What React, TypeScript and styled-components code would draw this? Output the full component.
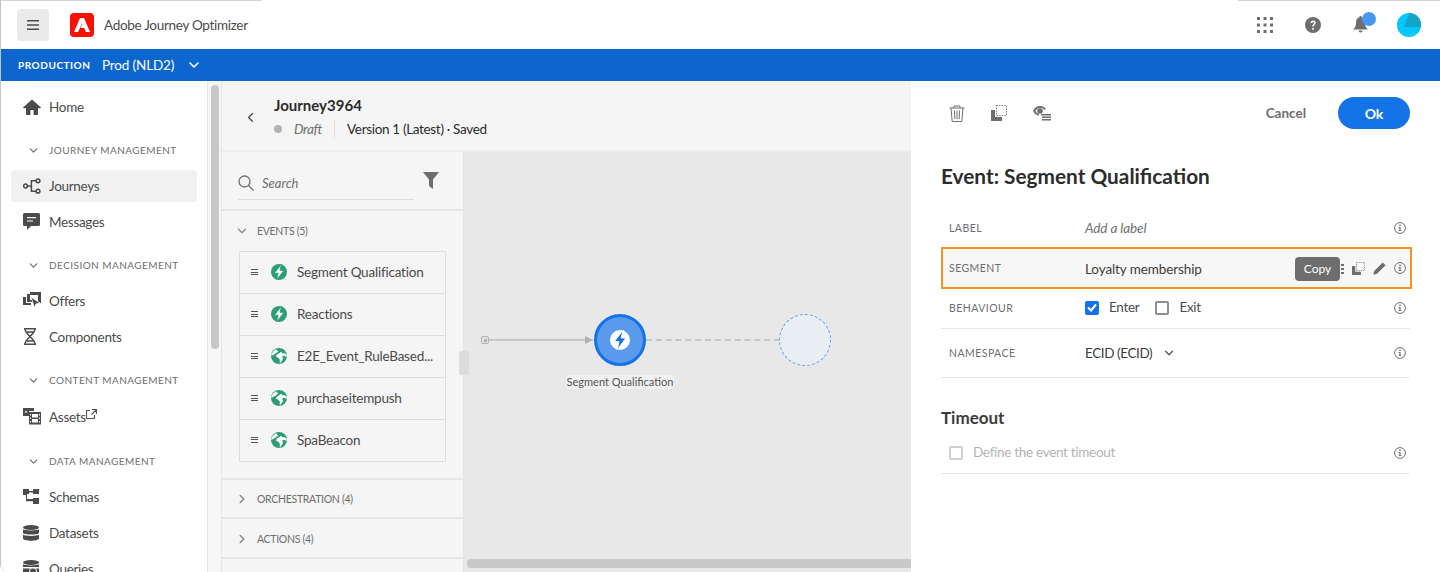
import React from "react";
import styled, { createGlobalStyle } from "styled-components";
import { ChevronDown, ChevronRight, ChevronLeft } from "lucide-react";

const Global = createGlobalStyle`
  html, body { margin: 0; padding: 0; background: #fff; }
  body { font-family: "Lato", "Noto Sans", sans-serif; color: #4b4b4b; }
  * { box-sizing: border-box; }
`;

const Frame = styled.div`
  width: 1440px; height: 572px; overflow: hidden; display: flex; flex-direction: column;
  border-left: 1px solid #c4c4c4; border-bottom-left-radius: 8px; background: #fff;
`;
const Header = styled.header`
  height: 49px; flex: none; display: flex; align-items: center; padding: 0 19px 0 16px;
  background: linear-gradient(90deg, #d4d4d4 261px, #fff 261px, #fff 1237px, #d4d4d4 1237px) top / 100% 1px no-repeat, #fff;
`;
const MenuButton = styled.div`
  width: 32px; height: 32px; background: #eaeaea; border-radius: 4px; display: flex; align-items: center; justify-content: center;
`;
const LogoBox = styled.div`
  width: 24px; height: 24px; background: #fa0f00; border-radius: 4px; margin-left: 21px; display: flex; align-items: center; justify-content: center;
`;
const AppName = styled.div`
  margin-left: 10px; font-size: 13.5px; color: #4b4b4b; letter-spacing: -0.3px;
`;
const HeaderIcons = styled.div`
  margin-left: auto; display: flex; align-items: center;
`;
const HeaderSlot = styled.div<{ $w: number; $gap?: number }>`
  width: ${(p) => p.$w}px; margin-right: ${(p) => p.$gap ?? 0}px; height: 32px; display: flex; align-items: center; justify-content: center; position: relative;
`;
const Dot = styled.span`
  position: absolute; width: 14px; height: 14px; border-radius: 50%; background: #4b96f3; top: 3px; left: 25px;
`;
const OrgBar = styled.div`
  height: 32px; flex: none; background: #0d66d0; color: #fff; display: flex; align-items: center; padding-left: 17px;
`;
const OrgLabel = styled.span`
  font-size: 10px; font-weight: 700; letter-spacing: 0.55px; width: 84px;
`;
const OrgName = styled.span`
  font-size: 13.5px; letter-spacing: -0.15px; width: 85px;
`;
const Body = styled.div`
  flex: 1; min-height: 0; display: flex;
`;
const Sidebar = styled.nav`
  width: 207px; flex: none; background: #fff; border-right: 1px solid #e6e6e6; padding: 8px 10px 0; overflow: hidden;
`;
const NavRow = styled.div<{ $active?: boolean; $tall?: boolean }>`
  height: ${(p) => (p.$tall ? 38 : 36)}px; display: flex; align-items: center; position: relative; padding-top: 1px;
  font-size: 13.5px; letter-spacing: -0.3px; color: #4b4b4b; margin-bottom: 0;
  &::before {
    content: ""; display: ${(p) => (p.$active ? "block" : "none")}; position: absolute; left: 0; right: 0; top: 2px; bottom: 2px;
    background: #f1f1f1; border-radius: 4px; z-index: 0;
  }
`;
const NavIcon = styled.span`
  width: 38px; padding-left: 12px; display: flex; position: relative; top: -1px; z-index: 1; flex: none;
`;
const NavText = styled.span`
  position: relative; top: -1px; z-index: 1;
`;
const SectionRow = styled.div`
  height: 43px; padding: 14px 0 0 16px; display: flex; align-items: flex-start; gap: 9px;
  font-size: 10px; letter-spacing: 0.45px; color: #6e6e6e; line-height: 22px; text-transform: uppercase;
  svg { margin-top: 5px; flex: none; }
`;
const Scroller = styled.div`
  width: 14px; flex: none; background: #f6f6f6; border-right: 1px solid #e6e6e6; padding: 4px 2px 0 3px;
`;
const ScrollThumb = styled.div`
  width: 8px; height: 264px; border-radius: 4px; background: #c8c8c8;
`;
const Main = styled.main`
  width: 689px; flex: none; display: flex; flex-direction: column; background: #f5f5f5;
`;
const JourneyHead = styled.div`
  height: 71px; flex: none; display: flex; border-bottom: 2px solid #ececec; padding-left: 21px; align-items: flex-start;
`;
const BackSlot = styled.div`
  width: 31px; padding-top: 28px; color: #555;
`;
const JourneyTitle = styled.div`
  margin-top: 14px; font-size: 15px; font-weight: 700; color: #2c2c2c; line-height: 20px;
`;
const JourneyMeta = styled.div`
  margin-top: 5px; display: flex; align-items: center; font-size: 13.5px; letter-spacing: -0.33px; line-height: 18px; color: #2c2c2c;
`;
const StatusDot = styled.span`
  width: 8px; height: 8px; background: #b3b3b3; border-radius: 50%; margin-right: 12px;
`;
const Draft = styled.span`
  font-style: italic; color: #6e6e6e; padding-right: 12px; border-right: 1px solid #e1e1e1; margin-right: 12px;
`;
const Workspace = styled.div`
  flex: 1; min-height: 0; display: flex; position: relative;
`;
const Palette = styled.aside`
  width: 242px; flex: none; border-right: 1px solid #e4e4e4; display: flex; flex-direction: column;
`;
const SearchRow = styled.div`
  height: 59px; flex: none; border-bottom: 2px solid #e6e6e6; padding: 0 24px 0 16px; display: flex; position: relative;
`;
const SearchField = styled.div`
  width: 176px; height: 48px; border-bottom: 1px solid #dcdcdc; display: flex; align-items: center; gap: 8px; padding-top: 15px;
  font-size: 13px; font-style: italic; color: #6e6e6e;
`;
const FilterSlot = styled.div`
  margin: 20px 0 0 9px;
`;
const GroupHead = styled.div<{ $h: number; $border?: boolean; $top?: boolean; $drop?: boolean }>`
  height: ${(p) => p.$h}px; flex: none; display: flex; align-items: center; gap: 8px; padding-left: 13px;
  padding-top: ${(p) => (p.$drop ? 2 : 0)}px;
  font-size: 10.5px; letter-spacing: -0.3px; color: #6e6e6e;
  border-bottom: ${(p) => (p.$border ? "2px solid #e6e6e6" : "none")};
  border-top: ${(p) => (p.$top ? "2px solid #e6e6e6" : "none")};
  svg { color: #8a8a8a; }
`;
const EventList = styled.div`
  margin: 0 17px 16px 17px; border: 1px solid #dedede; flex: none;
`;
const EventRow = styled.div`
  height: 42px; display: flex; align-items: center; font-size: 13.5px; color: #4b4b4b; border-bottom: 1px solid #dedede;
  padding: 0 0 1px 11px;
  &:last-child { height: 41px; border-bottom: 0; padding-bottom: 2px; }
`;
const Grip = styled.span`
  width: 7px; height: 6px; border-top: 1px solid #555; border-bottom: 1px solid #555; position: relative; margin-right: 13px;
  &::after { content: ""; position: absolute; left: 0; right: 0; top: 1.5px; height: 1px; background: #555; }
`;
const EventName = styled.span`
  margin-left: 10px; white-space: nowrap; letter-spacing: -0.22px;
`;
const Canvas = styled.section`
  flex: 1; background: #e8e8e8; position: relative; overflow: hidden;
`;
const Handle = styled.div`
  position: absolute; left: 237px; top: 199px; width: 10px; height: 24px; background: #dcdcdc; border-radius: 2px;
`;
const StartPort = styled.div`
  position: absolute; left: 17px; top: 184px; width: 8px; height: 8px; border: 1px solid #b5b5b5; border-radius: 2px; background: #e0e0e0;
  &::after { content: ""; position: absolute; left: 1.5px; top: 1.5px; width: 3px; height: 3px; border-radius: 50%; background: #a8a8a8; }
`;
const SolidLine = styled.div`
  position: absolute; left: 25px; top: 187px; width: 104px; height: 1px; background: #c4c4c4; box-shadow: 0 1px 0 #ccc;
`;
const Arrow = styled.div`
  position: absolute; left: 121px; top: 184px; width: 0; height: 0;
  border-left: 8px solid #b3b3b3; border-top: 4px solid transparent; border-bottom: 4px solid transparent;
`;
const EventNode = styled.div`
  position: absolute; left: 130px; top: 162px; width: 52px; height: 52px; border-radius: 50%; background: #5a9bee; border: 3px solid #1473e6;
  display: flex; align-items: center; justify-content: center;
`;
const NodeLabel = styled.div`
  position: absolute; left: 102px; top: 223px; width: 108px; height: 14px; border-radius: 3px; background: #f0f0f0;
  font-size: 11px; line-height: 14px; text-align: center; color: #555; white-space: nowrap;
`;
const DashLine = styled.div`
  position: absolute; left: 182px; top: 187px; width: 134px; height: 0; border-top: 2px dashed #c6c6c6;
`;
const GhostNode = styled.div`
  position: absolute; left: 315px; top: 162px; width: 52px; height: 52px; border-radius: 50%; background: #e9eef3; border: 1px dashed #5a9bee;
`;
const HScroll = styled.div`
  position: absolute; left: 3px; right: 0; top: 407px; height: 9px; border-radius: 4px 0 0 4px; background: #c8c8c8;
`;
const Panel = styled.aside`
  flex: 1; min-width: 0; background: #fff; padding: 0 30px; position: relative;
`;
const PanelBar = styled.div`
  height: 48px; margin-top: 8px; display: flex; align-items: center; padding-left: 8px;
`;
const ToolIcon = styled.span`
  width: 42px; display: flex; color: #6e6e6e;
`;
const Cancel = styled.span`
  margin-left: auto; font-size: 13.5px; font-weight: 700; color: #6e6e6e; margin-right: 32px;
`;
const Ok = styled.button`
  width: 72px; height: 32px; border: 0; border-radius: 16px; background: #1473e6; color: #fff; font: 700 14px "Lato", sans-serif;
`;
const PanelTitle = styled.h2`
  margin: 0; padding-top: 25px; height: 71px; font-size: 20.8px; font-weight: 700; color: #2c2c2c; line-height: 28px;
`;
const FormRow = styled.div<{ $h: number; $line?: boolean; $hot?: boolean; $lift?: number }>`
  height: ${(p) => p.$h}px; display: flex; align-items: center; padding-left: 8px; padding-bottom: ${(p) => p.$lift ?? 0}px;
  position: relative; margin-right: ${(p) => (p.$hot ? "-2px" : "0")};
  border-bottom: ${(p) => (p.$line ? "1px solid #e6e6e6" : "none")};
  ${(p) => (p.$hot ? "outline: 2px solid #f29423; outline-offset: -2px; background: #f7f7f7;" : "")}
`;
const FieldLabel = styled.span`
  width: 136px; font-size: 10.5px; letter-spacing: 0.45px; color: #6e6e6e; flex: none;
`;
const FieldValue = styled.span<{ $ghost?: boolean; $tight?: boolean; $drop?: boolean }>`
  font-size: 13.5px; letter-spacing: ${(p) => (p.$tight ? "-0.4px" : "-0.1px")}; position: relative; top: ${(p) => (p.$drop ? 1 : 0)}px;
  color: ${(p) => (p.$ghost ? "#6e6e6e" : "#3c3c3c")}; font-style: ${(p) => (p.$ghost ? "italic" : "normal")};
`;
const Info = styled.span<{ $nudge?: number }>`
  margin-left: auto; margin-right: ${(p) => p.$nudge ?? 4}px; display: flex; flex: none;
`;
const Check = styled.span<{ $on?: boolean; $off?: boolean }>`
  width: 14px; height: 14px; flex: none; border-radius: 2px; display: flex; align-items: center; justify-content: center;
  background: ${(p) => (p.$on ? "#1473e6" : "#fff")};
  border: ${(p) => (p.$on ? "none" : `2px solid ${p.$off ? "#d0d0d0" : "#8e8e8e"}`)};
`;
const CheckText = styled.span<{ $muted?: boolean }>`
  font-size: 13.5px; letter-spacing: -0.3px; margin: 0 16px 0 10px; position: relative; top: -1px; color: ${(p) => (p.$muted ? "#b3b3b3" : "#4b4b4b")};
`;
const SubTitle = styled.h3`
  margin: 0; height: 58px; padding-top: 28px; font-size: 17px; font-weight: 700; color: #3c3c3c; line-height: 24px;
`;
const Tip = styled.div`
  position: absolute; left: 354px; top: 10px; width: 45px; height: 24px; border-radius: 4px; background: #6e6e6e; color: #fff;
  font-size: 12px; line-height: 24px; text-align: center; z-index: 1;
`;
const RowTools = styled.div`
  position: absolute; left: 400px; top: 15px; display: flex; align-items: center; gap: 8px;
`;
const EdgeDots = styled.span`
  width: 3px; height: 10px; background: repeating-linear-gradient(#6e6e6e 0 2px, transparent 2px 4px);
`;

const Bolt = ({ size, bg, fg }: { size: number; bg: string; fg: string }) => (
  <svg width={size} height={size} viewBox="0 0 16 16">
    <circle cx="8" cy="8" r="8" fill={bg} />
    <path d="M10.600 0 3.400 9.200h3.800L5.600 16l7.200-9.600H8.900z" fill={fg} stroke={bg} strokeWidth="0.8" />
  </svg>
);
const Globe = () => (
  <svg width="16" height="16" viewBox="0 0 16 16">
    <circle cx="8" cy="8" r="8" fill="#2d9d78" />
    <path d="M2.600 3 5 1.200 7.200 3.400 4.600 5.400 2.800 6.400.4 8 .5 6Z" fill="#fff" />
    <path d="M8.500 5 10 3.800 11.600 5.600 13 5 15.600 6.500 15.800 9 13 7.800 11.200 8.400 12 11 10.400 13.400 8.800 15.700 8.800 11.500 7 9.400 4.800 8.600 6 6.400Z" fill="#fff" />
  </svg>
);
const InfoIcon = () => (
  <svg width="12" height="12" viewBox="0 0 12 12" fill="none">
    <circle cx="6" cy="6" r="5.400" stroke="#6e6e6e" strokeWidth="1" />
    <rect x="5.200" y="2.400" width="1.600" height="1.600" rx=".5" fill="#6e6e6e" />
    <path d="M4.600 5h2v3.200h.8v.9H4.600v-.9h.8V5.900h-.8z" fill="#6e6e6e" />
  </svg>
);
const CopyIcon = ({ size = 16 }: { size?: number }) => (
  <svg width={size} height={size} viewBox="0 0 16 16">
    <path d="M0 5h4v7h7v4H0z" fill="#6e6e6e" />
    <rect x="5.500" y=".5" width="10" height="10" fill="none" stroke="#777" strokeDasharray="1.400 1.200" />
  </svg>
);

const S = { fill: "#4b4b4b" };
const navIcons: Record<string, React.ReactNode> = {
  home: <svg width="18" height="16" viewBox="0 0 18 16"><path d="M9 .5 0 8.600l.6.6H3V16h4.400v-5h3.200v5H15V9.200h2.400l.6-.6z" {...S} /></svg>,
  journeys: <svg width="18" height="16" viewBox="0 0 18 16" fill="none" stroke="#4b4b4b" strokeWidth="1.500"><circle cx="2.500" cy="8" r="1.900" /><circle cx="15" cy="2.800" r="1.900" /><circle cx="15" cy="13.200" r="1.900" /><path d="M4.400 8h4M13 2.800H8.400v10.400H13" /></svg>,
  messages: <svg width="17" height="17" viewBox="0 0 17 17"><path d="M1.500 0h14A1.500 1.500 0 0 1 17 1.500v10a1.500 1.500 0 0 1-1.500 1.500H8l-4 4v-4H1.500A1.500 1.500 0 0 1 0 11.500v-10A1.500 1.500 0 0 1 1.500 0Z" {...S} /><path d="M4 4h9v1.200H4zM4 7.400h6v1.200H4z" fill="#fff" /></svg>,
  offers: <svg width="18" height="18" viewBox="0 0 18 18"><path d="M0 5h3v6h5v2H0zM4 2h3v6h3v2H4z" {...S} /><path d="M7 0h11v11h-3V3H7z" {...S} /><path d="M8 5l9 6-4 1-1.500 4z" {...S} stroke="#fff" strokeWidth=".8" /></svg>,
  components: <svg width="14" height="17" viewBox="0 0 14 17" fill="none" stroke="#4b4b4b" strokeWidth="1.500"><path d="M1 .8h12M1 16.200h12M2 1c0 5 10 10 10 15M12 1C12 6 2 11 2 16M4 4h6M4 13h6" /></svg>,
  assets: <svg width="18" height="17" viewBox="0 0 18 17"><path d="M0 0h11v3H6v5H0z" {...S} /><path d="M1.500 4.500 3 2.500l1.500 2z" fill="#fff" /><path d="M6 4h12v12.500H6z" {...S} /><path d="M9 6h6v3.500H9zM9 11h6v3.500H9zM7 6h1v1.500H7zM16 6h1v1.500h-1zM7 9.500h1V11H7zM16 9.500h1V11h-1zM7 13h1v1.500H7zM16 13h1v1.500h-1z" fill="#fff" /></svg>,
  schemas: <svg width="16" height="16" viewBox="0 0 16 16"><path d="M0 0h6v2h4V0h6v5h-6V3.500H6V5H4v5h6V9h6v6h-6v-2.800H3V6H0z" {...S} /></svg>,
  datasets: <svg width="16" height="16" viewBox="0 0 16 16"><ellipse cx="8" cy="2.500" rx="8" ry="2.500" {...S} /><path d="M0 4.300c1.500 1.500 14.500 1.500 16 0V8c-1 2-15 2-16 0zM0 9.800c1.500 1.500 14.500 1.500 16 0v3.700c-1 3-15 3-16 0z" {...S} /></svg>,
  queries: <svg width="17" height="17" viewBox="0 0 17 17"><ellipse cx="8" cy="2.500" rx="8" ry="2.500" {...S} /><path d="M0 4.300c1.500 1.500 14.500 1.500 16 0V7H0zM0 8.500h16V14H0z" {...S} /><circle cx="10" cy="11" r="3.500" fill="none" stroke="#fff" /></svg>,
};

const Nav = ({ icon, label, active, tall, ext }: { icon: string; label: string; active?: boolean; tall?: boolean; ext?: boolean }) => (
  <NavRow $active={active} $tall={tall}>
    <NavIcon>{navIcons[icon]}</NavIcon>
    <NavText>{label}</NavText>
    {ext && (
      <svg width="11" height="10" viewBox="0 0 11 10" fill="none" stroke="#555" strokeWidth="1.200" style={{ marginTop: -7 }}>
        <path d="M4 1.500H.5v8h8V6M6 .5h4.500V5M10 1 5.500 5.500" />
      </svg>
    )}
  </NavRow>
);
const Section = ({ children }: { children: string }) => (
  <SectionRow><ChevronDown size={13} color="#6e6e6e" strokeWidth={2.200} />{children}</SectionRow>
);
const events: [string, boolean][] = [
  ["Segment Qualification", true],
  ["Reactions", true],
  ["E2E_Event_RuleBased...", false],
  ["purchaseitempush", false],
  ["SpaBeacon", false],
];

export default function App() {
  return (
    <Frame>
      <Global />
      <Header>
        <MenuButton>
          <svg width="12" height="10" viewBox="0 0 12 10"><path d="M0 0h12v1.600H0zM0 4.200h12v1.600H0zM0 8.400h12V10H0z" fill="#4b4b4b" /></svg>
        </MenuButton>
        <LogoBox>
          <svg width="16" height="14" viewBox="0 0 16 14"><path d="M6 0h4l6 14h-4.100l-1.700-4H6.500l2-4.400L9.600 10 8 5.500 4.100 14H0z" fill="#fff" /></svg>
        </LogoBox>
        <AppName>Adobe Journey Optimizer</AppName>
        <HeaderIcons>
          <HeaderSlot $w={48}>
            <svg width="16" height="16" viewBox="0 0 16 16" fill="#6e6e6e">
              {[0, 6.500, 13].flatMap((y) => [0, 6.500, 13].map((x) => <rect key={`${x}-${y}`} x={x} y={y} width="3" height="3" />))}
            </svg>
          </HeaderSlot>
          <HeaderSlot $w={48}>
            <svg width="16" height="16" viewBox="0 0 16 16"><circle cx="8" cy="8" r="8" fill="#6e6e6e" /><path d="M5.500 6c0-3.300 5.200-3.300 5.200-.2 0 2-2 2-2 3.700H7.200c0-2.400 2-2.500 2-3.700 0-1-1.800-1-2 .2z" fill="#fff" /><circle cx="8" cy="11.800" r="1" fill="#fff" /></svg>
          </HeaderSlot>
          <HeaderSlot $w={46} $gap={14}>
            <svg width="15" height="17" viewBox="0 0 15 17"><path d="M7.500 0c.8 0 1.200.6 1.200 1.300C11 2 12 4 12 6.500c0 3 .6 5 3 7H0c2.400-2 3-4 3-7C3 4 4 2 6.300 1.300 6.300.6 6.700 0 7.500 0ZM5.500 14.500h4a2 2 0 0 1-4 0Z" fill="#6e6e6e" /></svg>
            <Dot />
          </HeaderSlot>
          <HeaderSlot $w={24}>
            <svg width="24" height="24" viewBox="0 0 24 24"><circle cx="12" cy="12" r="12" fill="#00c8ff" /><path d="M12 0a12 12 0 0 1 12 14H7z" fill="#12a5c5" /></svg>
          </HeaderSlot>
        </HeaderIcons>
      </Header>
      <OrgBar>
        <OrgLabel>PRODUCTION</OrgLabel>
        <OrgName>Prod (NLD2)</OrgName>
        <ChevronDown size={16} color="#fff" strokeWidth={2.400} style={{ marginLeft: -1 }} />
      </OrgBar>
      <Body>
        <Sidebar>
          <Nav icon="home" label="Home" />
          <Section>Journey Management</Section>
          <Nav icon="journeys" label="Journeys" active />
          <Nav icon="messages" label="Messages" />
          <Section>Decision Management</Section>
          <Nav icon="offers" label="Offers" />
          <Nav icon="components" label="Components" />
          <Section>Content Management</Section>
          <Nav icon="assets" label="Assets" tall ext />
          <Section>Data Management</Section>
          <Nav icon="schemas" label="Schemas" />
          <Nav icon="datasets" label="Datasets" />
          <Nav icon="queries" label="Queries" />
        </Sidebar>
        <Scroller><ScrollThumb /></Scroller>
        <Main>
          <JourneyHead>
            <BackSlot><ChevronLeft size={15} strokeWidth={2.400} /></BackSlot>
            <div>
              <JourneyTitle>Journey3964</JourneyTitle>
              <JourneyMeta>
                <StatusDot />
                <Draft>Draft</Draft>
                Version 1 (Latest) · Saved
              </JourneyMeta>
            </div>
          </JourneyHead>
          <Workspace>
            <Palette>
              <SearchRow>
                <SearchField>
                  <svg width="16" height="16" viewBox="0 0 16 16" fill="none" stroke="#6e6e6e" strokeWidth="1.300"><circle cx="6.500" cy="6.500" r="5.500" /><path d="m10.500 10.500 5 5" /></svg>
                  Search
                </SearchField>
                <FilterSlot>
                  <svg width="16" height="17" viewBox="0 0 16 17"><path d="M0 0h16L10 7.500V17l-4-3V7.500z" fill="#6e6e6e" /></svg>
                </FilterSlot>
              </SearchRow>
              <GroupHead $h={40}><ChevronDown size={14} strokeWidth={2.200} />EVENTS (5)</GroupHead>
              <EventList>
                {events.map(([name, bolt]) => (
                  <EventRow key={name}>
                    <Grip />
                    {bolt ? <Bolt size={16} bg="#2d9d78" fg="#fff" /> : <Globe />}
                    <EventName>{name}</EventName>
                  </EventRow>
                ))}
              </EventList>
              <GroupHead $h={41} $border $top><ChevronRight size={14} strokeWidth={2.600} />ORCHESTRATION (4)</GroupHead>
              <GroupHead $h={40} $border $drop><ChevronRight size={14} strokeWidth={2.600} />ACTIONS (4)</GroupHead>
            </Palette>
            <Canvas>
              <StartPort />
              <SolidLine />
              <Arrow />
              <DashLine />
              <EventNode><Bolt size={20} bg="#fff" fg="#1473e6" /></EventNode>
              <NodeLabel>Segment Qualification</NodeLabel>
              <GhostNode />
              <HScroll />
            </Canvas>
            <Handle />
          </Workspace>
        </Main>
        <Panel>
          <PanelBar>
            <ToolIcon>
              <svg width="16" height="17" viewBox="0 0 16 17" fill="none" stroke="#6e6e6e"><path d="M.5 3h15M5 3V1h6v2M2 3l1.200 13.500h9.600L14 3M5.500 5.500l.3 8.500M8 5.500V14M10.500 5.500 10.200 14" /></svg>
            </ToolIcon>
            <ToolIcon><CopyIcon /></ToolIcon>
            <ToolIcon>
              <svg width="18" height="16" viewBox="0 0 18 16"><path d="M0 6c1.500-3.500 4-5 7-5 2.500 0 4.500 1 6 3l-1.500 1C10.500 3.500 9 3 7 3 5 3 3.500 4 2.400 6c.8 1.300 1.900 2.500 3.600 3v1.800C3.500 10.300 1.300 8.700 0 6Z" fill="#6e6e6e" /><circle cx="7" cy="6" r="2.800" fill="#6e6e6e" /><path d="M8 9h10v1.400H8zM9 11.500h9v1.400H9zM9 14h9v1.400H9z" fill="#6e6e6e" /></svg>
            </ToolIcon>
            <Cancel>Cancel</Cancel>
            <Ok>Ok</Ok>
          </PanelBar>
          <PanelTitle>Event: Segment Qualification</PanelTitle>
          <FormRow $h={39}>
            <FieldLabel>LABEL</FieldLabel>
            <FieldValue $ghost>Add a label</FieldValue>
            <Info><InfoIcon /></Info>
          </FormRow>
          <FormRow $h={42} $hot>
            <FieldLabel>SEGMENT</FieldLabel>
            <FieldValue $drop>Loyalty membership</FieldValue>
            <Tip>Copy</Tip>
            <RowTools>
              <EdgeDots />
              <CopyIcon size={13} />
              <svg width="13" height="13" viewBox="0 0 13 13"><path d="M9.800.4 12.600 3.200 4 11.800.3 12.700l.9-3.700z" fill="#6e6e6e" /></svg>
            </RowTools>
            <Info $nudge={6}><InfoIcon /></Info>
          </FormRow>
          <FormRow $h={40} $line $lift={2}>
            <FieldLabel>BEHAVIOUR</FieldLabel>
            <Check $on>
              <svg width="10" height="9" viewBox="0 0 10 9" fill="none" stroke="#fff" strokeWidth="2"><path d="m1 4.500 3 3 5-6" /></svg>
            </Check>
            <CheckText>Enter</CheckText>
            <Check />
            <CheckText>Exit</CheckText>
            <Info><InfoIcon /></Info>
          </FormRow>
          <FormRow $h={49} $line>
            <FieldLabel>NAMESPACE</FieldLabel>
            <FieldValue $tight>ECID (ECID)</FieldValue>
            <ChevronDown size={14} color="#555" strokeWidth={2.200} style={{ marginLeft: 10 }} />
            <Info><InfoIcon /></Info>
          </FormRow>
          <SubTitle>Timeout</SubTitle>
          <FormRow $h={38} $line $lift={3}>
            <Check $off />
            <CheckText $muted>Define the event timeout</CheckText>
            <Info><InfoIcon /></Info>
          </FormRow>
        </Panel>
      </Body>
    </Frame>
  );
}
